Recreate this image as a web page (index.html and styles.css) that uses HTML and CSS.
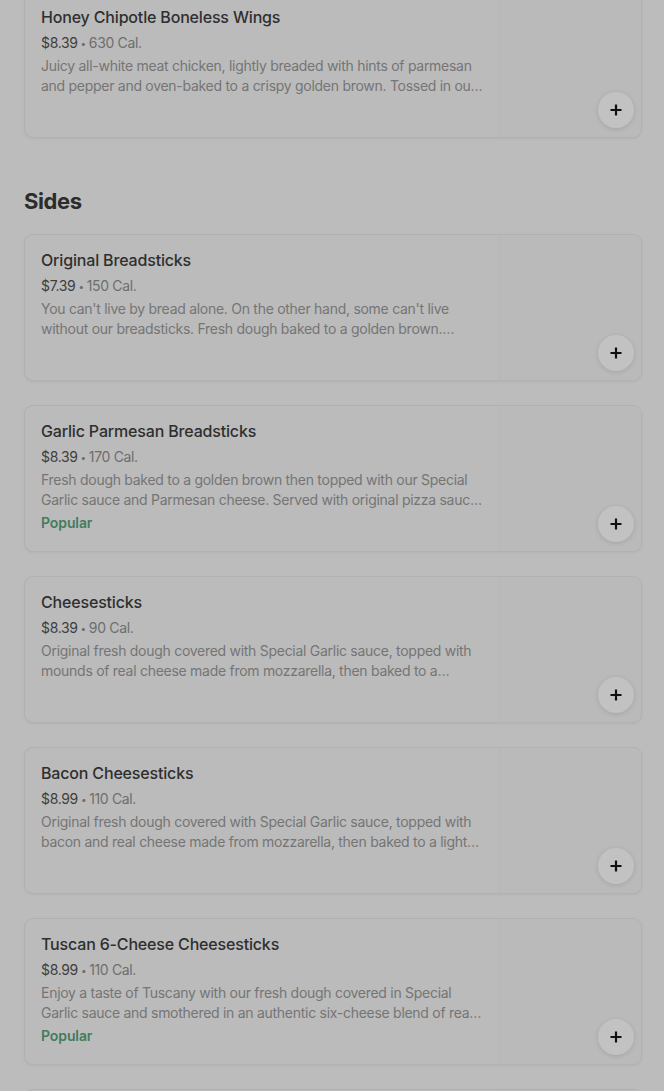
FILE: index.html
```html
<!DOCTYPE html>
<html>
<head>
<meta charset="utf-8">
<link rel="stylesheet" href="styles.css">
</head>
<body>
<div class="page">
  <div class="list first">
    <div class="card">
      <div class="info">
        <div class="title">Honey Chipotle Boneless Wings</div>
        <div class="meta"><span class="price">$8.39</span><span class="dot">•</span>630 Cal.</div>
        <div class="desc">Juicy all-white meat chicken, lightly breaded with hints of parmesan and pepper and oven-baked to a crispy golden brown. Tossed in our honey chipotle sauce.</div>
      </div>
      <div class="thumb"></div>
      <button class="add"><svg viewBox="0 0 14 14" width="14" height="14"><path d="M7 1.5v11M1.5 7h11" stroke="#111" stroke-width="2.2" fill="none"/></svg></button>
    </div>
  </div>

  <h2 class="section-title">Sides</h2>

  <div class="list">
    <div class="card">
      <div class="info">
        <div class="title">Original Breadsticks</div>
        <div class="meta"><span class="price">$7.39</span><span class="dot">•</span>150 Cal.</div>
        <div class="desc">You can't live by bread alone. On the other hand, some can't live without our breadsticks. Fresh dough baked to a golden brown. Seasoned with a garlic-butter blend.</div>
      </div>
      <div class="thumb"></div>
      <button class="add"><svg viewBox="0 0 14 14" width="14" height="14"><path d="M7 1.5v11M1.5 7h11" stroke="#111" stroke-width="2.2" fill="none"/></svg></button>
    </div>

    <div class="card">
      <div class="info">
        <div class="title">Garlic Parmesan Breadsticks</div>
        <div class="meta"><span class="price">$8.39</span><span class="dot">•</span>170 Cal.</div>
        <div class="desc">Fresh dough baked to a golden brown then topped with our Special Garlic sauce and Parmesan cheese. Served with original pizza sauce for dipping.</div>
        <div class="tag">Popular</div>
      </div>
      <div class="thumb"></div>
      <button class="add"><svg viewBox="0 0 14 14" width="14" height="14"><path d="M7 1.5v11M1.5 7h11" stroke="#111" stroke-width="2.2" fill="none"/></svg></button>
    </div>

    <div class="card">
      <div class="info">
        <div class="title">Cheesesticks</div>
        <div class="meta"><span class="price">$8.39</span><span class="dot">•</span>90 Cal.</div>
        <div class="desc">Original fresh dough covered with Special Garlic sauce, topped with mounds of real cheese made from mozzarella, then baked to a golden brown.</div>
      </div>
      <div class="thumb"></div>
      <button class="add"><svg viewBox="0 0 14 14" width="14" height="14"><path d="M7 1.5v11M1.5 7h11" stroke="#111" stroke-width="2.2" fill="none"/></svg></button>
    </div>

    <div class="card">
      <div class="info">
        <div class="title">Bacon Cheesesticks</div>
        <div class="meta"><span class="price">$8.99</span><span class="dot">•</span>110 Cal.</div>
        <div class="desc">Original fresh dough covered with Special Garlic sauce, topped with bacon and real cheese made from mozzarella, then baked to a light golden brown.</div>
      </div>
      <div class="thumb"></div>
      <button class="add"><svg viewBox="0 0 14 14" width="14" height="14"><path d="M7 1.5v11M1.5 7h11" stroke="#111" stroke-width="2.2" fill="none"/></svg></button>
    </div>

    <div class="card">
      <div class="info">
        <div class="title">Tuscan 6-Cheese Cheesesticks</div>
        <div class="meta"><span class="price">$8.99</span><span class="dot">•</span>110 Cal.</div>
        <div class="desc">Enjoy a taste of Tuscany with our fresh dough covered in Special Garlic sauce and smothered in an authentic six-cheese blend of real cheese.</div>
        <div class="tag">Popular</div>
      </div>
      <div class="thumb"></div>
      <button class="add"><svg viewBox="0 0 14 14" width="14" height="14"><path d="M7 1.5v11M1.5 7h11" stroke="#111" stroke-width="2.2" fill="none"/></svg></button>
    </div>

    <div class="card">
      <div class="info">
        <div class="title">Stuffed Cheesy Bread</div>
        <div class="meta"><span class="price">$8.99</span><span class="dot">•</span>150 Cal.</div>
        <div class="desc">Oven-baked breadsticks stuffed with cheese and covered in a blend of cheese made with mozzarella and cheddar.</div>
      </div>
      <div class="thumb"></div>
      <button class="add"><svg viewBox="0 0 14 14" width="14" height="14"><path d="M7 1.5v11M1.5 7h11" stroke="#111" stroke-width="2.2" fill="none"/></svg></button>
    </div>
  </div>
</div>
</body>
</html>
```
FILE: styles.css
```css
html, body {
  margin: 0;
  padding: 0;
  background: #bcbcbc;
  overflow: hidden;
}
body {
  font-family: Inter, Roboto, "Liberation Sans", sans-serif;
  color: #333;
}
.page {
  padding: 0 22px 0 24px;
}
.list {
  display: flex;
  flex-direction: column;
  gap: 24px;
}
.list.first {
  margin-top: -9px;
}
.card {
  position: relative;
  display: flex;
  height: 145px;
  border: 1px solid #b1b1b1;
  border-radius: 9px;
  box-shadow: 0 1px 3px rgba(0, 0, 0, 0.05);
  overflow: hidden;
  background: #bbbbbb;
}
.info {
  flex: 1;
  padding: 14px 16px 0 16px;
  min-width: 0;
}
.title {
  font-size: 16px;
  font-weight: 500;
  line-height: 22px;
  letter-spacing: -0.17px;
  color: #2f2f2f;
}
.meta {
  margin-top: 5px;
  font-size: 14px;
  line-height: 20px;
  letter-spacing: -0.35px;
  color: #6e6e6e;
}
.price {
  color: #3e3e3e;
}
.dot {
  font-size: 10px;
  margin: 0 3px;
  vertical-align: 1px;
}
.desc {
  margin-top: 3px;
  font-size: 14px;
  line-height: 20px;
  letter-spacing: -0.28px;
  color: #757575;
  display: -webkit-box;
  -webkit-line-clamp: 2;
  -webkit-box-orient: vertical;
  overflow: hidden;
}
.tag {
  margin-top: 3px;
  font-size: 14px;
  line-height: 20px;
  font-weight: 600;
  letter-spacing: -0.1px;
  color: #437c5d;
}
.thumb {
  width: 141px;
  flex: none;
  background: #bababa;
  border-left: 1px solid #b6b6b6;
}
.add {
  position: absolute;
  right: 7px;
  bottom: 9px;
  width: 36px;
  height: 36px;
  border-radius: 50%;
  border: none;
  padding: 0;
  background: #c2c2c2;
  box-shadow: 0 1px 5px rgba(0, 0, 0, 0.12);
  display: flex;
  align-items: center;
  justify-content: center;
}
.section-title {
  margin: 49px 0 19px 0;
  font-size: 22px;
  line-height: 28px;
  font-weight: 700;
  color: #2c2c2c;
  letter-spacing: -0.4px;
}
```
